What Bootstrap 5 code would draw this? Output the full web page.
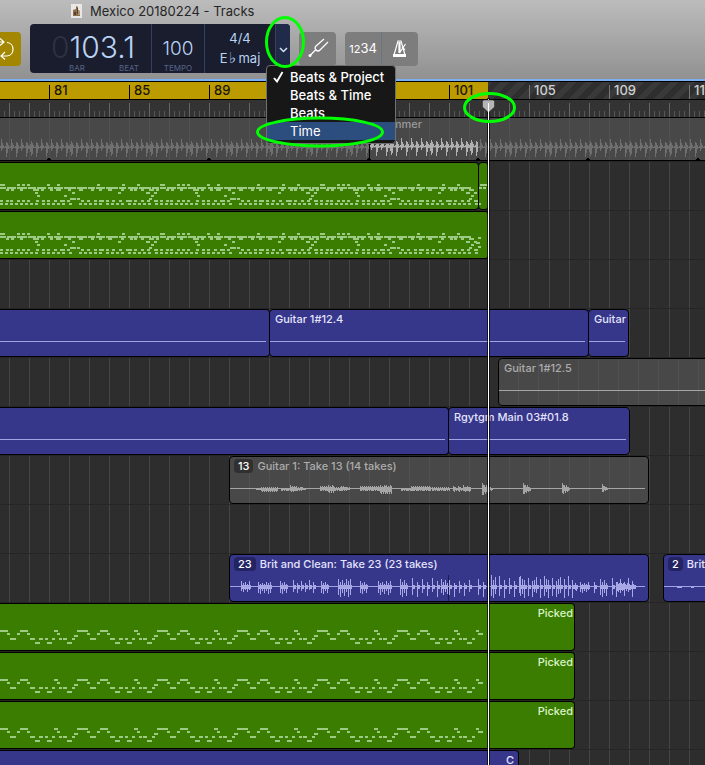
<!DOCTYPE html>
<html lang="en">
<head>
<meta charset="utf-8">
<meta name="viewport" content="width=device-width, initial-scale=1">
<title>Mexico 20180224 - Tracks</title>
<link href="https://cdn.jsdelivr.net/npm/bootstrap@5.3.0/dist/css/bootstrap.min.css" rel="stylesheet">
<style>
body{font-family:Inter,"Liberation Sans",sans-serif;background:#2d2d2d;font-size:11px;line-height:14px}
.window-top{background:linear-gradient(#bcbcbc,#919191);border-bottom:2px solid #7cb0f5}
.title-row{height:24px;font-size:13px;color:#262626;padding:0 0 3px 71px}
.tool-row{height:55px;padding-bottom:6px}
.tool{height:34px;background:#7d7d7d;border:0;color:#fff;padding:0}
.cycle{width:21px;background:#a38700;border-radius:0 4px 4px 0}
.lcd{width:260px;height:49px;margin-left:9px;background:#1a1d2d;color:#b9d3f5;border-radius:4px}
.lcd-cell{border-right:1px solid #36415f;padding-bottom:1px}
.lcd-pos{width:122px}
.lcd-tempo{width:53px}
.lcd-big{font-size:30px;line-height:30px;font-weight:300;padding-right:16px}
.lcd-unset{color:#2d3142}
.lcd-mid{font-size:19px;line-height:22px;font-weight:300}
.lcd-tag{font-size:8px;line-height:8px;color:#56658a}
.lcd-units{margin:2px 12px 0 39px}
.lcd-key{font-size:13px;line-height:13px}
.lcd-flat{font-size:15px;line-height:10px;margin:0 2px}
.lcd-more{width:14px;background:#1f2b49;border:0;padding:0;border-radius:0 4px 0 0}
.mode-menu{left:236px;top:41px;width:130px;min-width:0;padding:2px 0 3px;background:#171717;border:1px solid #707070;border-radius:4px;z-index:20}
.mode-menu .dropdown-item{height:18px;line-height:18px;font-size:13px;font-weight:500;color:#fff;padding:0 0 0 23px}
.mode-menu .dropdown-item.active{background:#2c4e7f;font-weight:400}
.tick-mark{left:6px;top:3px}
.tuner{width:37px;margin:0 9px}
.count-in{width:37px;font-size:13px;border-radius:4px 0 0 4px}
.count-in span{font-size:11px}
.metronome{width:36px;border-radius:0 4px 4px 0}
.ruler{height:18px;font-size:13px;line-height:18px;font-weight:500;border-top:1px solid #000;background:repeating-linear-gradient(135deg,#2e2e2e 0 6px,#393939 6px 12px)}
.cycle-range{width:488px;background:#bb9b00}
.bar-no{left:var(--x);top:3px;height:14px;line-height:10px;padding-left:4px;border-left:1px solid #777;color:#d0d0d0}
.bar-no.in-range{border-color:#000;color:#1c1600}
.ticks{height:18px;border-top:1px solid #000;
background:repeating-linear-gradient(90deg,transparent 0 9px,#656565 9px 10px,transparent 10px 20px) 0 3px/auto 15px repeat-x,
repeating-linear-gradient(90deg,transparent 0 4px,#565656 4px 5px) 0 11px/auto 7px repeat-x,#333}
.lane{height:49px;background:repeating-linear-gradient(90deg,transparent 0 9px,#454545 9px 10px,transparent 10px 20px),#2d2d2d;border-bottom:1px solid #262626}
.drum-lane{height:45px}
.region{left:var(--x);width:var(--w);top:0;height:48px;border:1px solid #000;border-radius:4px;padding:2px 5px 0;font-weight:500;color:#e4e4fb;background:#36368b;white-space:nowrap}
.region.run-in{border-top-left-radius:0;border-bottom-left-radius:0;border-left:0}
.region.midi{background:#3a7d00;color:#ddf3cb;padding-right:1px;text-align:right}
.region.muted{color:#acacac;background:repeating-linear-gradient(90deg,transparent 0 19px,#515151 19px 20px),#484848}
.region.drums{height:44px;border-radius:0;color:#9a9a9a;background:repeating-linear-gradient(90deg,transparent 0 9px,#525252 9px 10px,transparent 10px 20px),#484848}
.region.sub{background:none;border-width:0;padding-top:0;padding-left:3px}
.region.rest::after{content:"";position:absolute;left:0;right:3px;top:31px;border-top:1px solid #a3a3e4}
.region.muted.rest::after{border-color:#a5a5a5}
.region svg{position:absolute;left:0;top:0;width:100%;height:100%}
.takes{position:relative;z-index:1;line-height:14px;border-radius:4px;background:#242462;color:#fff;padding:0 4px;margin:0 4px 0 -1px}
.muted .takes{background:#303030}
.playhead{left:488px;top:18px;bottom:0;width:1px;background:#fff;box-shadow:0 0 0 1px rgba(0,0,0,.7);z-index:10}
.playhead svg{left:-6px;top:0}
.marks{z-index:30;left:0;top:0;pointer-events:none}
</style>
<script src="https://cdn.jsdelivr.net/npm/bootstrap@5.3.0/dist/js/bootstrap.bundle.min.js"></script>
</head>
<body>
<div class="vh-100 d-flex flex-column overflow-hidden position-relative">
<header class="window-top flex-shrink-0">
  <div class="title-row d-flex align-items-center">
    <svg width="11" height="14" viewBox="0 0 11 14" class="me-1 flex-shrink-0"><rect width="11" height="14" fill="#e9e7e4"/><path d="M2 6l3-1V2l2 1v3l2 1v5H2z" fill="#8d6e48"/><path d="M3 8h2v3H3zM6 4h1v6H6z" fill="#554330"/><path d="M7 7h2v4H7z" fill="#a99477"/></svg>
    <span class="ps-1">Mexico 20180224 - Tracks</span>
  </div>
  <div class="tool-row d-flex align-items-center">
    <button class="tool cycle flex-shrink-0" aria-label="Cycle"><svg width="21" height="34" viewBox="0 0 21 34" class="d-block" fill="none" stroke="#fff" stroke-width="1.2"><path d="M-3 10H4M0 6.500l4 3.500-4 3.500M7 10.500c8 .5 8 13 0 13.500H1M5 20l-4 4 4 3.500"/></svg></button>
    <div class="lcd position-relative d-flex flex-shrink-0">
      <div class="lcd-cell lcd-pos d-flex flex-column justify-content-end">
        <div class="lcd-big text-end"><span class="lcd-unset">0</span>103.1</div>
        <div class="lcd-tag lcd-units d-flex justify-content-between"><span>BAR</span><span>BEAT</span></div>
      </div>
      <div class="lcd-cell lcd-tempo d-flex flex-column justify-content-end text-center">
        <div class="lcd-mid mb-1">100</div><div class="lcd-tag">TEMPO</div>
      </div>
      <div class="lcd-cell flex-fill d-flex flex-column justify-content-between text-center py-2">
        <div class="lcd-key">4/4</div><div class="lcd-key">E<span class="lcd-flat">♭</span>maj</div>
      </div>
      <button class="lcd-more" aria-label="Display mode"><svg width="9" height="6" viewBox="0 0 9 6" fill="none" stroke="#d5e2f7" stroke-width="1.500"><path d="M1 1l3.500 3.500L8 1"/></svg></button>
      <div class="dropdown-menu mode-menu show">
        <a class="dropdown-item position-relative" href="#"><svg class="tick-mark position-absolute" width="11" height="12" viewBox="0 0 11 12" fill="none" stroke="#fff" stroke-width="1.900"><path d="M1 7l3 3.500L9.500 1"/></svg>Beats &amp; Project</a>
        <a class="dropdown-item" href="#">Beats &amp; Time</a>
        <a class="dropdown-item" href="#">Beats</a>
        <a class="dropdown-item active" href="#">Time</a>
      </div>
    </div>
    <button class="tool tuner rounded-1 flex-shrink-0" aria-label="Tuner"><svg width="37" height="34" viewBox="0 0 37 34" class="d-block" fill="none" stroke="#fff" stroke-width="1.200"><path d="M11 23.500l6-6"/><circle cx="11" cy="23.500" r="1.500" fill="#fff" stroke="none"/><path d="M25 7l-8 7c-1.500 1.500-1 3 0 4s2.500 1.500 4 0l8-8"/></svg></button>
    <div class="d-flex flex-shrink-0">
      <button class="tool count-in border-end border-secondary"><span>12</span>34</button>
      <button class="tool metronome" aria-label="Metronome"><svg width="36" height="34" viewBox="0 0 36 34" class="d-block" fill="none" stroke="#fff" stroke-width="1.200"><path d="M12 23l4-14h3l4 14z"/><path d="M11 22h13v3H11z" fill="#fff" stroke="none"/><path d="M17.500 21l6-9M17 10v11M18 10v11M20 15l3 3"/></svg></button>
    </div>
  </div>
</header>

<main class="position-relative flex-fill">
  <div class="ruler position-relative" id="ruler"><div class="cycle-range h-100"></div></div>
  <div class="ticks"></div>
  <div class="lane drum-lane position-relative">
    <div class="region drums run-in position-absolute" style="--x:0;--w:101%"><svg data-wave="drumsDim"></svg></div>
    <div class="region drums sub position-absolute" style="--x:370px;--w:109px">Drummer<svg data-wave="drumsLit"></svg></div>
  </div>
  <div class="lane position-relative">
    <div class="region midi run-in position-absolute" style="--x:0;--w:479px"><svg data-notes="groove"></svg></div>
    <div class="region midi position-absolute" style="--x:478px;--w:11px"><svg data-notes="tail"></svg></div>
  </div>
  <div class="lane position-relative"><div class="region midi run-in position-absolute" style="--x:0;--w:489px"><svg data-notes="groove"></svg></div></div>
  <div class="lane"></div>
  <div class="lane position-relative">
    <div class="region run-in rest position-absolute" style="--x:0;--w:270px"></div>
    <div class="region rest position-absolute" style="--x:269px;--w:320px">Guitar 1#12.4</div>
    <div class="region rest position-absolute" style="--x:588px;--w:41px">Guitar</div>
  </div>
  <div class="lane position-relative"><div class="region muted rest position-absolute" style="--x:498px;--w:240px">Guitar 1#12.5</div></div>
  <div class="lane position-relative">
    <div class="region run-in rest position-absolute" style="--x:0;--w:449px"></div>
    <div class="region rest position-absolute" style="--x:448px;--w:182px">Rgytgm Main 03#01.8</div>
  </div>
  <div class="lane position-relative"><div class="region muted rest position-absolute" style="--x:229px;--w:420px"><span class="takes d-inline-block">13</span>Guitar 1: Take 13 (14 takes)<svg data-wave="takes"></svg></div></div>
  <div class="lane"></div>
  <div class="lane position-relative">
    <div class="region rest position-absolute" style="--x:229px;--w:420px"><span class="takes d-inline-block">23</span>Brit and Clean: Take 23 (23 takes)<svg data-wave="brit"></svg></div>
    <div class="region rest position-absolute" style="--x:663px;--w:120px"><span class="takes d-inline-block">2</span>Brit<svg data-wave="brit2"></svg></div>
  </div>
  <div class="lane position-relative"><div class="region midi run-in position-absolute" style="--x:0;--w:575px">Picked<svg data-notes="picked"></svg></div></div>
  <div class="lane position-relative"><div class="region midi run-in position-absolute" style="--x:0;--w:575px">Picked<svg data-notes="picked"></svg></div></div>
  <div class="lane position-relative"><div class="region midi run-in position-absolute" style="--x:0;--w:575px">Picked<svg data-notes="picked"></svg></div></div>
  <div class="lane position-relative"><div class="region run-in position-absolute text-end pe-0" style="--x:0;--w:519px"><span class="pe-1">C</span></div></div>
  <div class="playhead position-absolute"><svg class="position-absolute" width="14" height="15" viewBox="0 0 14 15"><path d="M2 1h9l1.500 1v6l-6 5.500L.5 8V2z" fill="#b5b5b5" stroke="#333" stroke-width=".6"/><path d="M6.500 4v11" stroke="#fff"/></svg></div>
</main>

<svg class="marks position-absolute" width="560" height="160" viewBox="0 0 560 160" fill="none" stroke="#0f0" stroke-width="3"><ellipse cx="285" cy="42" rx="18.500" ry="24.500"/><ellipse cx="320" cy="132" rx="62.500" ry="14"/><ellipse cx="489.500" cy="107.500" rx="25" ry="14"/></svg>
</div>
<script>
// Bar numbers, 80px for every four bars
[81,85,89,93,97,101,105,109,113].forEach(function(n,i){
  if(n===93||n===97)return; // behind the open menu
  var d=document.createElement('div');
  d.className='bar-no position-absolute'+(n<103?' in-range':'');
  d.style.setProperty('--x',49+80*i+'px');
  d.textContent=n;
  document.getElementById('ruler').appendChild(d);
});
function put(svg,d,fill){
  var p=document.createElementNS('http://www.w3.org/2000/svg','path');
  p.setAttribute('d',d);p.setAttribute('fill',fill);p.setAttribute('shape-rendering','crispEdges');svg.appendChild(p);
}
function bar(x,y,w,h){return 'M'+x+' '+y+'h'+w+'v'+h+'h'+(-w)+'z';}

// Vertical strokes at 1px steps around a centre line
function drums(x0,x1){
  var d='',up=[0,1,8,4,2],dn=[1,1,4,2,1];
  for(var x=x0;x<x1;x++){
    var k=(x+6)%5,b=Math.floor((x+6)/5),u=up[k],v=dn[k];
    if(b%2===0){v=[1,1,10,6,2][k];u-=k===2?3:0;}
    if(b%8===7){u=[1,3,6,4,2][k];v=[2,5,9,7,1][k];}
    u=Math.max(0,u);
    d+=bar(x-x0,29-u,1,u+v);
  }
  return d;
}
function clusters(list,cy){
  var d='';
  list.forEach(function(c){
    for(var x=c[0],i=0;x<c[1];x+=c[2],i++){
      var u=Math.max(1,Math.round(c[3]*[1,.6,.85,.5,.95,.7][i%6])),v=Math.max(1,Math.round(c[4]*[.8,1,.6,.9,.5,1][i%6]));
      if(c[5])u=Math.max(1,Math.round(u*(1-i*c[5]))),v=Math.max(1,Math.round(v*(1-i*c[5])));
      d+=bar(x-230,cy-u,1,u+v);
      if(c[2]>1)d+=bar(x-229,cy-2,Math.min(2,c[2]-1),4);
    }
  });
  return d;
}
var waves={
  drumsDim:function(s){
    put(s,drums(0,369)+bar(369,29,110,1),'#6f6f6f');
    put(s,drums(0,242).replace(/M(\d+)/g,function(m,n){return 'M'+(+n+479);}),'#6f6f6f');
    put(s,bar(369,26,1,17),'#000');
    [49,209,369,478,588,698].forEach(function(x){put(s,'M'+(x-3)+' 43l3-4 3 4z','#000');});
  },
  drumsLit:function(s){put(s,drums(370,478),'#b0b0b0');},
  takes:function(s){
    put(s,clusters([[256,261,1,1,1],[261,278,1,2,3],[281,290,1,1,2],[290,306,1,4,3,.04],[320,328,1,3,2],[328,334,1,4,4],[334,341,1,2,2],[341,350,1,3,2,.05],[360,380,1,3,2],[380,392,1,4,5],[401,415,1,1,2],[411,431,1,3,2],[432,450,1,2,2],[453,458,1,3,3,.15],[458,463,1,3,3,.15],[463,471,2,4,3],[482,493,1,6,7,.08],[523,531,1,6,6,.1],[562,570,1,6,5,.1],[602,608,1,5,4,.15]],32),'#a5a5a5');
  },
  brit:function(s){
    put(s,clusters([[241,250,2,6,5],[258,271,2,5,7],[280,287,2,6,7],[293,316,4,7,6],[321,328,2,6,7],[338,352,2,8,10],[360,367,2,6,7],[378,391,2,6,8],[400,407,2,8,10],[412,440,5,9,10],[441,448,2,8,8],[449,474,5,7,10],[478,488,5,8,10],[491,496,2,12,11],[499,520,5,11,11],[520,575,4,11,11],[522,570,6,8,9],[575,578,1,4,4,.1],[580,590,2,5,6],[594,597,3,5,8],[600,607,2,8,10],[612,634,4,9,10],[617,636,1,5,5,.03]],32),'#a9a9e8');
    put(s,bar(218,20,1,26),'#1c1c50');
  },
  brit2:function(s){put(s,bar(13,31,5,2)+bar(27,31,3,2),'#a9a9e8');}
};

// Note blocks: [y, [x, width, x, width, ...]] within one repeating phrase
var groove=[[22,[0,5,17,3,22,3,27,3,47,3,57,3,97,3,122,3,137,3]],
 [25,[0,6,7,9,17,10,28,8,37,9,48,5,54,9,64,12,77,10,88,7,96,9,106,12,119,7,128,10,139,12,152,7]],
 [27,[6,3,11,3,20,3,33,6,41,3,50,3,56,5,68,3,79,4,91,3,99,3,108,4,121,3,130,3,134,3,141,3,149,5,156,3]],
 [30,[35,3,72,3,118,3,146,4,154,3]],[33,[37,3,64,3,151,3]],
 [36,[70,6,77,3,149,3]],
 [38,[0,3,6,3,10,3,17,3,22,3,27,3,36,3,42,3,47,3,54,3,60,5,67,3,81,3,87,3,94,3,99,5,106,3,112,3,119,3,126,6,134,3,141,3,147,3,154,4]],
 [41,[0,3,5,3,10,3,15,3,20,3,25,3,30,3,35,3,42,3,47,3,52,3,57,3,62,3,69,3,79,3,84,3,89,3,94,3,99,3,106,3,111,3,116,3,121,3,128,3,133,3,138,3,143,3,148,3,155,3]]];
var picked=[[27,[0,8,20,8,54,4,77,3]],[30,[7,3,17,3,27,3,57,3]],[32,[74,4]],[35,[10,6,30,5,39,4,45,3,52,3,59,3,63,4,72,3]],[39,[35,5,47,5,67,5]]];
function phrase(rows,period,end){
  var d='';
  rows.forEach(function(r){
    for(var o=0;o<end;o+=period)for(var i=0;i<r[1].length;i+=2)
      if(o+r[1][i]+r[1][i+1]<=end)d+=bar(o+r[1][i],r[0]-1,r[1][i+1],2);
  });
  return d;
}
document.querySelectorAll('svg[data-wave]').forEach(function(s){waves[s.dataset.wave](s);});
document.querySelectorAll('svg[data-notes]').forEach(function(s){
  var k=s.dataset.notes,d;
  if(k==='groove')d=phrase(groove,160,478)+(s.parentNode.offsetWidth>480?bar(478,25,3,2)+bar(476,30,4,2)+bar(478,34,3,2):'');
  else if(k==='tail')d=bar(1,21,7,2)+bar(0,24,3,2)+bar(4,24,3,2)+bar(0,40,2,2);
  else d=phrase(picked,80,476)+bar(476,26,3,2)+bar(478,29,5,2);
  put(s,d,'#9dca85');
});
</script>
</body>
</html>
